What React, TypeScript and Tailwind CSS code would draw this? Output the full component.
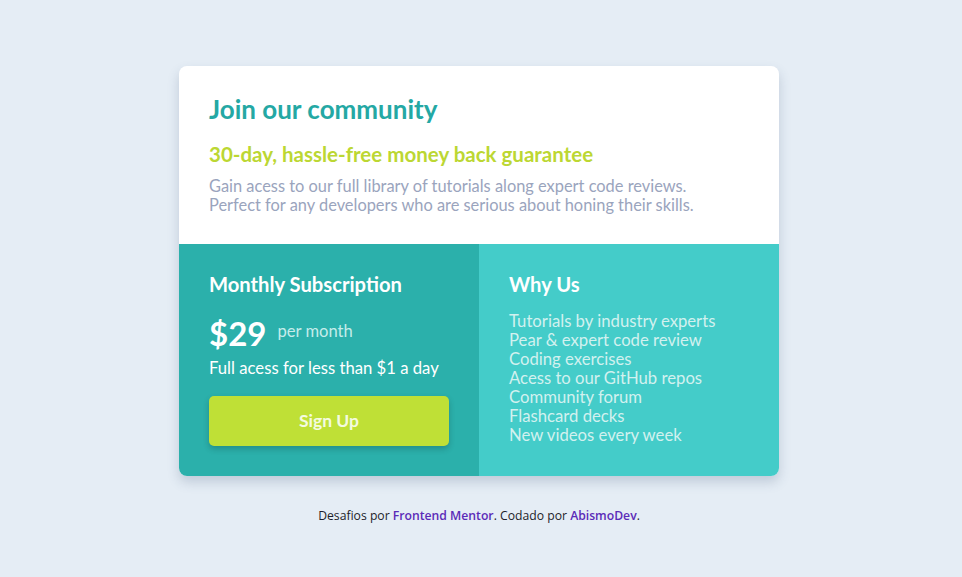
const perks = [
  "Tutorials by industry experts",
  "Pear & expert code review",
  "Coding exercises",
  "Acess to our GitHub repos",
  "Community forum",
  "Flashcard decks",
  "New videos every week",
];

const App = () => {
  return (
    <div className="min-h-screen bg-[#e5edf5] pt-[66px] pr-[4px] font-['Lato',sans-serif]">
      <main className="mx-auto w-[600px] overflow-hidden rounded-lg bg-white shadow-[0_6px_12px_rgba(60,80,120,0.22)]">
        <section className="h-[178px] px-[30px] pt-[28px]">
          <h1 className="text-[26px] font-bold leading-[30px] text-[#24a8a4]">Join our community</h1>
          <h2 className="mt-[18px] text-[20.5px] font-bold leading-[24px] text-[#bcd733]">
            30-day, hassle-free money back guarantee
          </h2>
          <p className="mt-[10px] text-[16.4px] leading-[19px] text-[#9aa4bd]">
            Gain acess to our full library of tutorials along expert code reviews.
            <br />
            Perfect for any developers who are serious about honing their skills.
          </p>
        </section>

        <div className="grid grid-cols-2">
          <section className="h-[232px] bg-[#2bb0ab] px-[30px] pt-[28px] text-white">
            <h3 className="text-[20.2px] font-bold leading-[24px]">Monthly Subscription</h3>
            <div className="mt-[18px] flex items-center gap-[11px]">
              <span className="text-[33px] font-bold leading-[38px]">$29</span>
              <span className="-mt-[4px] text-[16.6px] leading-[20px] text-[#c5ecea]">per month</span>
            </div>
            <p className="mt-[6px] text-[16.7px] leading-[20px]">Full acess for less than $1 a day</p>
            <button className="mt-[18px] h-[50px] w-[240px] rounded-[5px] bg-[#bfe036] text-[17.5px] font-bold text-[#f4fbe0] shadow-[0_3px_6px_rgba(0,0,0,0.2)]">
              Sign Up
            </button>
          </section>

          <section className="h-[232px] bg-[#44ccc9] px-[30px] pt-[28px]">
            <h3 className="text-[20.2px] font-bold leading-[24px] text-white">Why Us</h3>
            <ul className="mt-[16px] text-[16.7px] leading-[19px] text-[#d2f1ef]">
              {perks.map((p) => (
                <li key={p}>{p}</li>
              ))}
            </ul>
          </section>
        </div>
      </main>

      <p className="mt-[31px] text-center font-['Open_Sans',sans-serif] text-[12.2px] text-[#1e1e2a]">
        Desafios por{" "}
        <a href="#" className="font-semibold text-[#5b2bb8]">
          Frontend Mentor
        </a>
        . Codado por{" "}
        <a href="#" className="font-semibold text-[#5b2bb8]">
          AbismoDev
        </a>
        .
      </p>
    </div>
  );
};

export default App;
